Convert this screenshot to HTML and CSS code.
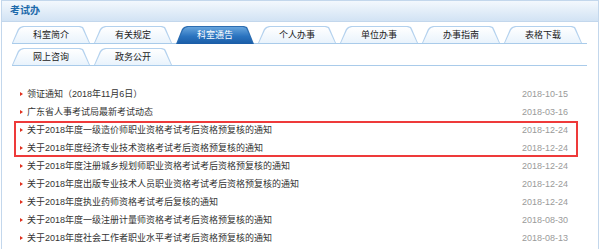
FILE: index.html
```html
<!DOCTYPE html>
<html lang="zh-CN">
<head>
    <meta charset="UTF-8">
    <title>考试办</title>
    <link rel="stylesheet" href="styles.css">
</head>
<body>

<div class="panel">
    <div class="panel-head">考试办</div>

    <div class="tabs">
        <div class="tab-row">
            <a class="tab">科室简介</a>
            <a class="tab">有关规定</a>
            <a class="tab active">科室通告</a>
            <a class="tab">个人办事</a>
            <a class="tab">单位办事</a>
            <a class="tab">办事指南</a>
            <a class="tab">表格下载</a>
        </div>
        <div class="tab-row">
            <a class="tab">网上咨询</a>
            <a class="tab">政务公开</a>
        </div>
    </div>

    <div class="news">
        <div class="item"><span class="title">领证通知（2018年11月6日）</span><span class="date">2018-10-15</span></div>
        <div class="item"><span class="title">广东省人事考试局最新考试动态</span><span class="date">2018-03-16</span></div>
        <div class="mark">
            <div class="item"><span class="title">关于2018年度一级造价师职业资格考试考后资格预复核的通知</span><span class="date">2018-12-24</span></div>
            <div class="item"><span class="title">关于2018年度经济专业技术资格考试考后资格预复核的通知</span><span class="date">2018-12-24</span></div>
        </div>
        <div class="item"><span class="title">关于2018年度注册城乡规划师职业资格考试考后资格预复核的通知</span><span class="date">2018-12-24</span></div>
        <div class="item"><span class="title">关于2018年度出版专业技术人员职业资格考试考后资格预复核的通知</span><span class="date">2018-12-24</span></div>
        <div class="item"><span class="title">关于2018年度执业药师资格考试考后复核的通知</span><span class="date">2018-12-24</span></div>
        <div class="item"><span class="title">关于2018年度一级注册计量师资格考试考后资格预复核的通知</span><span class="date">2018-08-30</span></div>
        <div class="item"><span class="title">关于2018年度社会工作者职业水平考试考后资格预复核的通知</span><span class="date">2018-08-13</span></div>
    </div>
</div>

</body>
</html>
```

FILE: styles.css
```css
:root {
    --line-color: #c3d7ec;
    --tab-border: #b3d1ee;
    --text-color: #333333;
    --date-color: #9a9a9a;
    --mark-color: #ee3a3a;
    --font-cjk: "Liberation Sans", "Noto Sans CJK SC", sans-serif;
}

* {
    box-sizing: border-box;
    margin: 0;
    padding: 0;
}

body {
    background: #ffffff;
    font-family: var(--font-cjk);
    color: var(--text-color);
    overflow: hidden;
}

.panel {
    width: 598px;
    height: 249px;
    margin-left: 1px;
    border: 1px solid var(--line-color);
    border-bottom: none;
    overflow: hidden;
}

.panel-head {
    height: 21px;
    padding-left: 8px;
    background: linear-gradient(#f3f8fd, #d2e3f4);
    border-bottom: 1px solid var(--line-color);
    color: #1d6aab;
    font-size: 10px;
    font-weight: bold;
    line-height: 20px;
}

.tabs {
    padding: 4px 0 0 10px;
}

.tab-row {
    display: flex;
    gap: 4px;
    width: 575px;
    height: 18px;
    margin-bottom: 4px;
    border-bottom: 1px solid #a9cbea;
}

.tab {
    position: relative;
    z-index: 0;
    width: 78px;
    height: 17px;
    font-size: 9px;
    line-height: 18px;
    text-align: center;
    color: #222;
}

/* tab shape: border layer + fill layer */
.tab::before,
.tab::after {
    content: '';
    position: absolute;
    z-index: -1;
    clip-path: polygon(0 100%, 6px 3px, 8px 1px, 11px 0, calc(100% - 10px) 0, calc(100% - 7px) 1px, calc(100% - 6px) 3px, 100% 100%);
}

.tab::before {
    inset: 0;
    background: var(--tab-border);
}

.tab::after {
    inset: 1px 1px 0 1px;
    background: linear-gradient(#ffffff, #e9f3fc);
}

.tab.active {
    color: #ffffff;
    height: 18px;
}

.tab.active::before {
    background: #2c6db1;
}

.tab.active::after {
    background: linear-gradient(#67a5dd, #2a73bf 55%, #1a5ca6);
}

.news {
    padding: 15px 20px 0 12px;
}

.item {
    display: flex;
    justify-content: space-between;
    height: 18px;
    padding: 0 10px 0 13px;
    font-size: 9px;
    line-height: 18px;
    position: relative;
}

/* small red arrow before each title */
.item::before {
    content: '';
    position: absolute;
    left: 6px;
    top: 7px;
    border-left: 3px solid #e0301e;
    border-top: 2.5px solid transparent;
    border-bottom: 2.5px solid transparent;
}

.date {
    color: var(--date-color);
    font-family: "Liberation Sans", sans-serif;
}

.mark {
    box-shadow: inset 0 0 0 2px var(--mark-color);
}
```
